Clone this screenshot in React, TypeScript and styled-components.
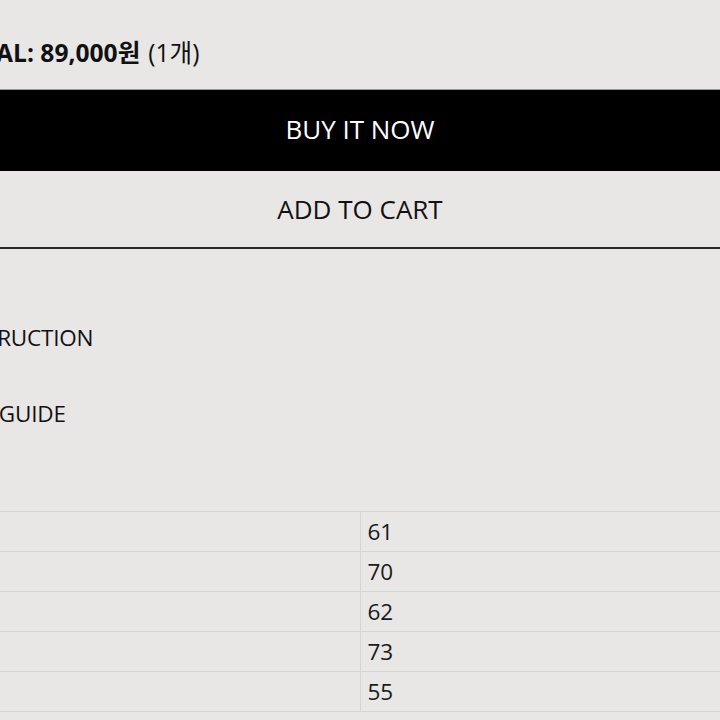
import styled, { createGlobalStyle } from "styled-components";

const GlobalStyle = createGlobalStyle`
    html, body {
        margin: 0;
        padding: 0;
        background: #e8e7e5;
        overflow: hidden;
    }
    body {
        font-family: "Open Sans", "Noto Sans CJK KR", sans-serif;
        color: #111;
    }
`;

// the product panel is wider than the viewport and sits centred on it
const Page = styled.div`
    width: 880px;
    margin-left: -80px;
    padding: 0 30px;
    box-sizing: border-box;
`;

const Summary = styled.div`
    display: flex;
    align-items: center;
    gap: 8px;
    height: 89px;
    padding-top: 12px;
    margin-left: -2px;
    box-sizing: border-box;
    font-size: 24.6px;
    white-space: nowrap;
`;

const Total = styled.strong`
    font-weight: 700;
`;

const Quantity = styled.span`
    font-weight: 400;
`;

const ActionButton = styled.button<{ $primary?: boolean }>`
    display: flex;
    align-items: center;
    justify-content: center;
    width: 100%;
    height: ${(p) => (p.$primary ? "82px" : "78px")};
    margin: 0;
    padding: 0 0 ${(p) => (p.$primary ? "3px" : "0")};
    font-family: inherit;
    font-size: 26px;
    background: ${(p) => (p.$primary ? "#000" : "transparent")};
    color: ${(p) => (p.$primary ? "#fff" : "#111")};
    border: none;
    border-top: ${(p) => (p.$primary ? "1px solid #9a9a98" : "none")};
    border-bottom: ${(p) => (p.$primary ? "none" : "2px solid #2a2a2a")};
    cursor: pointer;
`;

const InfoList = styled.div`
    margin-top: 50px;
    display: flex;
    flex-direction: column;
`;

const InfoItem = styled.div`
    display: flex;
    align-items: center;
    height: 76px;
    font-size: 22.5px;
    letter-spacing: -0.2px;
`;

const SizeTable = styled.table`
    width: 100%;
    margin-top: 60px;
    border-collapse: collapse;
    table-layout: fixed;
`;

const Cell = styled.td`
    height: 39px;
    padding: 0 7px;
    font-size: 22.5px;
    color: #1a1a1a;
    border-top: 1px solid #d6d5d3;
    border-bottom: 1px solid #d6d5d3;
    & + & {
        border-left: 1px solid #d6d5d3;
    }
`;

const Label = styled.span`
    visibility: hidden;
`;

const sizeRows = [
    { label: "총장", value: "61" },
    { label: "가슴단면", value: "70" },
    { label: "어깨너비", value: "62" },
    { label: "소매길이", value: "73" },
    { label: "밑단단면", value: "55" },
];

const App = () => {
    return (
        <Page>
            <GlobalStyle />
            <Summary>
                <Total>TOTAL: 89,000원</Total>
                <Quantity>(1개)</Quantity>
            </Summary>

            <ActionButton $primary>BUY IT NOW</ActionButton>
            <ActionButton>ADD TO CART</ActionButton>

            <InfoList>
                <InfoItem>INSTRUCTION</InfoItem>
                <InfoItem>SIZE GUIDE</InfoItem>
            </InfoList>

            <SizeTable>
                <tbody>
                    {sizeRows.map((row) => (
                        <tr key={row.value}>
                            <Cell>
                                <Label>{row.label}</Label>
                            </Cell>
                            <Cell>{row.value}</Cell>
                        </tr>
                    ))}
                </tbody>
            </SizeTable>
        </Page>
    );
};

export default App;
